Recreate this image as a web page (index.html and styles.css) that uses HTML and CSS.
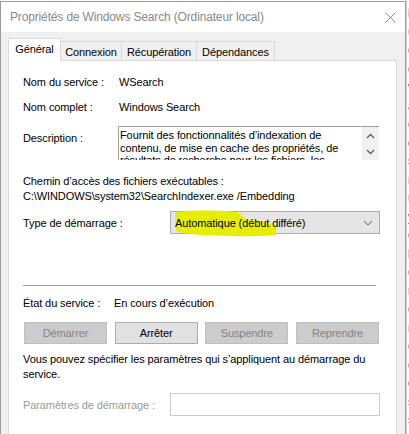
FILE: index.html
```html
<!DOCTYPE html>
<html lang="fr">
<head>
<meta charset="utf-8">
<title>Propriétés de Windows Search</title>
<link rel="stylesheet" href="styles.css">
</head>
<body>
<div class="screen">
  <div class="dialog">
    <div class="titlebar">
      <span class="title">Propriétés de Windows Search (Ordinateur local)</span>
      <svg class="close" width="11" height="11" viewBox="0 0 11 11"><path d="M0.5 0.5 L10.5 10.5 M10.5 0.5 L0.5 10.5" stroke="#8c8c8c" stroke-width="1" fill="none"/></svg>
    </div>
    <div class="body">
      <div class="tabs">
        <div class="tab active">Général</div>
        <div class="tab w-conn">Connexion</div>
        <div class="tab w-recup">Récupération</div>
        <div class="tab w-dep">Dépendances</div>
      </div>
      <div class="panel">
        <div class="row r-name"><span class="lbl w96">Nom du service :</span><span>WSearch</span></div>
        <div class="row r-full"><span class="lbl w96">Nom complet :</span><span>Windows Search</span></div>
        <div class="row r-desc">
          <span class="lbl w95 desc-lbl">Description :</span>
          <div class="descbox">
            <div class="desctext">Fournit des fonctionnalités d’indexation de<br>contenu, de mise en cache des propriétés, de<br>résultats de recherche pour les fichiers, les</div>
            <div class="vscroll">
              <svg width="9" height="6" viewBox="0 0 9 6"><path d="M1 5 L4.5 1.5 L8 5" stroke="#606060" stroke-width="1.4" fill="none"/></svg>
              <svg width="9" height="6" viewBox="0 0 9 6"><path d="M1 1 L4.5 4.5 L8 1" stroke="#606060" stroke-width="1.4" fill="none"/></svg>
            </div>
          </div>
        </div>
        <div class="line r-chemin">Chemin d’accès des fichiers exécutables :</div>
        <div class="line r-path">C:\WINDOWS\system32\SearchIndexer.exe /Embedding</div>
        <div class="row r-type">
          <span class="lbl w147">Type de démarrage :</span>
          <div class="combo">
            <svg class="highlight" width="110" height="30" viewBox="0 0 110 30"><path d="M4 3 C14 0 40 0 66 2 C70 6 74 9 80 10 C90 11 100 13 105 16 L105 25 C86 27 50 26 30 25 C18 24 9 23 5 21 Z" fill="#e6ee00"/></svg>
            <span class="combo-text">Automatique (début différé)</span>
            <svg class="chev" width="10" height="6" viewBox="0 0 10 6"><path d="M1 1 L5 5 L9 1" stroke="#606060" stroke-width="1" fill="none"/></svg>
          </div>
        </div>
        <div class="sep"></div>
        <div class="row r-etat"><span class="lbl w91">État du service :</span><span>En cours d’exécution</span></div>
        <div class="buttons">
          <div class="btn disabled">Démarrer</div>
          <div class="btn">Arrêter</div>
          <div class="btn disabled">Suspendre</div>
          <div class="btn disabled">Reprendre</div>
        </div>
        <div class="note">Vous pouvez spécifier les paramètres qui s’appliquent au démarrage du<br>service.</div>
        <div class="row r-param">
          <span class="lbl w147 muted">Paramètres de démarrage :</span>
          <div class="input"></div>
        </div>
      </div>
    </div>
  </div>
  <div class="backdrop">
    <div class="frag">i<br>u<br>c<br>c<br>v<br>a<br>c<br>o<br>s<br>r<br>u<br>y<br>c<br>l<br>e<br>r<br>e<br>r<br>e<br>c<br>o<br>s<br>s</div>
  </div>
</div>
</body>
</html>
```
FILE: styles.css
```css
html, body {
  margin: 0;
  padding: 0;
  overflow: hidden;
}
body {
  background: #ffffff;
  font-family: "Liberation Sans", Arial, sans-serif;
  font-size: 11px;
  letter-spacing: -0.1px;
  color: #000;
}
.screen {
  display: flex;
  width: 409px;
  height: 434px;
  overflow: hidden;
}
.dialog {
  flex: none;
  width: 406px;
  height: 433px;
  margin-top: 1px;
  box-sizing: border-box;
  border: 1px solid #9c9c9c;
  border-bottom: none;
  background: #f0f0f0;
  display: flex;
  flex-direction: column;
}
.titlebar {
  flex: none;
  height: 30px;
  background: #ffffff;
  display: flex;
  align-items: center;
  padding-left: 9px;
}
.title {
  color: #8a8a8a;
  font-size: 12px;
  letter-spacing: -0.15px;
  white-space: nowrap;
}
.close {
  margin-left: auto;
  margin-right: 9px;
}
.body {
  flex: 1;
  display: flex;
  flex-direction: column;
  padding: 6px 0 0 7px;
  min-height: 0;
}
.tabs {
  flex: none;
  height: 22px;
  display: flex;
  align-items: flex-end;
  position: relative;
  z-index: 1;
}
.tab {
  box-sizing: border-box;
  height: 19px;
  border: 1px solid #d9d9d9;
  border-bottom: none;
  background: #f0f0f0;
  display: flex;
  align-items: center;
  justify-content: center;
  margin-left: -1px;
  white-space: nowrap;
  padding-top: 1px;
}
.tab.active {
  height: 23px;
  width: 53px;
  margin-left: 0;
  margin-bottom: -1px;
  background: #ffffff;
  padding-top: 0;
  padding-bottom: 2px;
}
.w-conn { width: 62px; }
.w-recup { width: 76px; }
.w-dep { width: 79px; }
.panel {
  flex: 1;
  width: 389px;
  box-sizing: border-box;
  border: 1px solid #d9d9d9;
  border-bottom: none;
  background: #ffffff;
  padding: 0 14px;
  display: flex;
  flex-direction: column;
}
.row {
  display: flex;
  align-items: center;
  line-height: 14px;
  white-space: nowrap;
}
.line {
  line-height: 14px;
  white-space: nowrap;
}
.lbl { flex: none; }
.w96 { width: 96px; }
.w95 { width: 95px; }
.w91 { width: 91px; }
.w147 { width: 147px; }
.muted { color: #9a9a9a; }
.r-name { margin-top: 14px; height: 14px; }
.r-full { margin-top: 11px; height: 14px; }
.r-desc { margin-top: 12px; height: 34px; align-items: flex-start; }
.desc-lbl { padding-top: 5px; }
.descbox {
  width: 261px;
  height: 34px;
  box-sizing: border-box;
  border-top: 1px solid #a0a0a0;
  border-left: 1px solid #a0a0a0;
  display: flex;
  overflow: hidden;
}
.desctext {
  flex: 1;
  padding: 2px 0 0 1px;
  line-height: 12.5px;
  white-space: nowrap;
  overflow: hidden;
}
.vscroll {
  flex: none;
  width: 17px;
  background: #f0f0f0;
  display: flex;
  flex-direction: column;
  align-items: center;
  justify-content: space-between;
  padding: 6px 0 5px;
  box-sizing: border-box;
}
.r-chemin { margin-top: 14px; }
.r-path { margin-top: 1px; }
.r-type { margin-top: 8px; height: 23px; }
.combo {
  position: relative;
  width: 210px;
  height: 23px;
  box-sizing: border-box;
  border: 1px solid #adadad;
  background: #e5e5e5;
  display: flex;
  align-items: center;
  padding-left: 4px;
  padding-top: 1px;
}
.combo-text { position: relative; z-index: 1; }
.chev {
  margin-left: auto;
  margin-right: 6px;
}
.highlight {
  position: absolute;
  left: 0;
  top: -2px;
  z-index: 0;
  pointer-events: none;
}
.sep {
  margin-top: 51px;
  height: 1px;
  width: 353px;
  background: #a0a0a0;
  flex: none;
}
.r-etat { margin-top: 10px; height: 14px; }
.buttons {
  margin-top: 12px;
  display: flex;
  justify-content: space-between;
  padding: 0 3px 0 1px;
}
.btn {
  width: 83px;
  height: 22px;
  box-sizing: border-box;
  border: 1px solid #adadad;
  background: #e1e1e1;
  display: flex;
  align-items: center;
  justify-content: center;
}
.btn.disabled {
  background: #cccccc;
  border-color: #bfbfbf;
  color: #838383;
}
.note {
  margin-top: 8px;
  line-height: 15px;
  white-space: nowrap;
}
.r-param { margin-top: 11px; height: 23px; }
.input {
  width: 210px;
  height: 23px;
  box-sizing: border-box;
  border: 1px solid #cccccc;
  background: #ffffff;
}
.backdrop {
  flex: 1;
  background: #ffffff;
  overflow: hidden;
  border-left: 1px solid #d0d0d0;
}
.frag {
  padding-top: 4px;
  padding-left: 1px;
  font-size: 12px;
  line-height: 18.5px;
  color: #2a2a70;
}
```
